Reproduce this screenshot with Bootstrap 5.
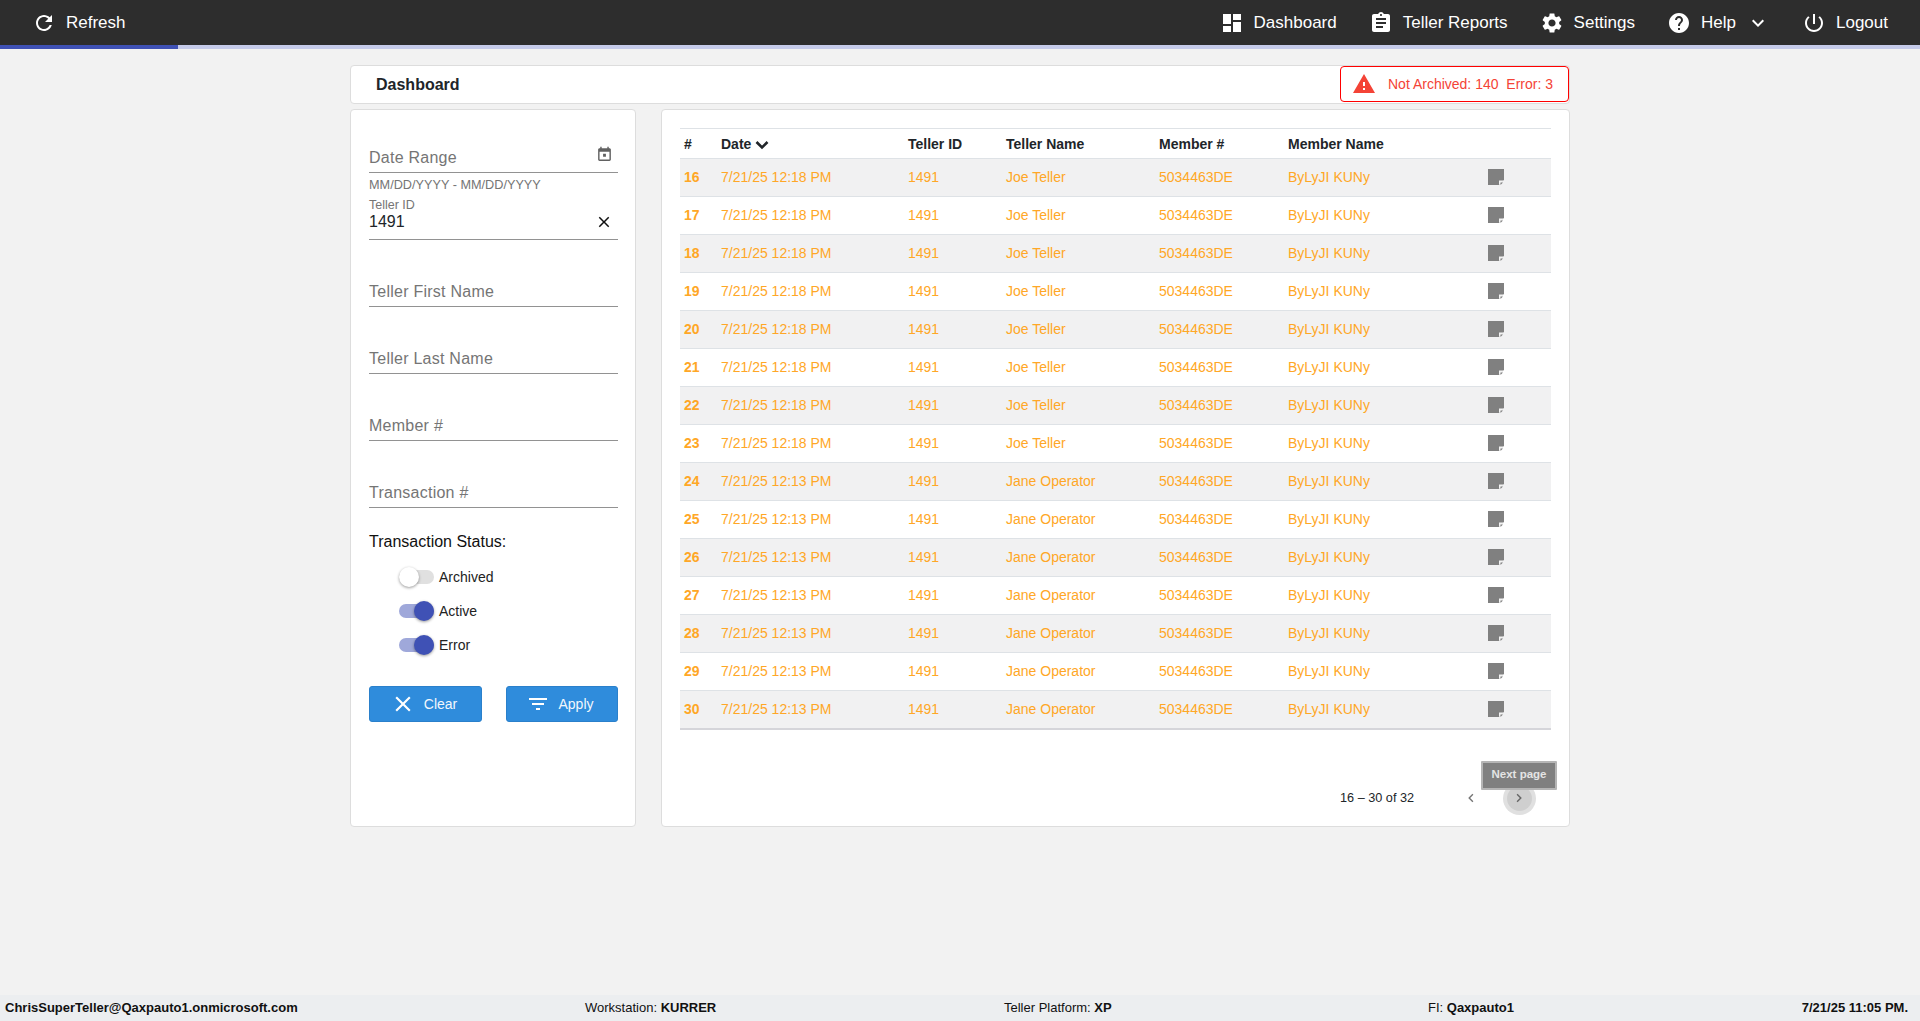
<!DOCTYPE html>
<html lang="en">
<head>
<meta charset="utf-8">
<title>Dashboard</title>
<link href="https://cdn.jsdelivr.net/npm/bootstrap@5.3.0/dist/css/bootstrap.min.css" rel="stylesheet">
<style>
html,body{height:100%}
body{background:#f2f2f2;font-family:"Liberation Sans",Arial,sans-serif;font-size:14px;color:#212529}
.shell{min-height:1021px;height:1021px}
.topbar{height:45px;background:#2d2d2d;color:#fff;padding:0 32px;font-size:17px}
.topbar .navlink{color:#fff;text-decoration:none;display:flex;align-items:center}
.topbar .navlink+.navlink{margin-left:32px}
.topbar svg{fill:#fff}
.ico24{width:24px;height:24px;margin-right:10px}
.helpchev{width:24px;height:24px;margin-left:10px}
.progresswrap{height:4px;background:#c5cae9}
.progressfill{height:4px;width:178px;background:#3f51b5}
.wrap{width:1220px;margin:16px auto 0}
.titlecard{height:39px;background:#fff;border:1px solid #ddd;border-radius:4px;margin-bottom:5px;padding-left:25px}
.titletext{font-size:16px;font-weight:700;color:#212529}
.alertbox{width:229px;height:36px;align-self:flex-start;border:1px solid #f00;border-radius:4px;color:#f44336;font-size:14px;padding-left:11px;background:#fff;white-space:pre}
.alertbox svg{width:24px;height:24px;fill:#f44336;margin-right:12px}
.sidecard{width:286px;height:718px;background:#fff;border:1px solid #ddd;border-radius:4px;padding:1px 17px 0 18px;flex:none}
.maincard{width:909px;height:718px;background:#fff;border:1px solid #ddd;border-radius:4px;padding:18px 18px 0;flex:none}
.fieldbox{border-bottom:1px solid #929292;position:relative;height:67px;color:#757575;font-size:16px;display:flex;align-items:flex-end;padding-bottom:4px;letter-spacing:.25px}
.fieldbox .fieldtxt{line-height:20px}
.fieldbox.firstbox{height:62px}
.fieldbox.tellerbox{height:45px;display:block;padding:0;letter-spacing:0}
.hinttxt{font-size:12.7px;color:#757575;height:22px;line-height:22px;padding-top:1px}
.minilabel{font-size:12.5px;line-height:14px;color:#757575;padding-top:3px;height:18px}
.valtxt{font-size:16px;line-height:18px;color:#212529}
.calico{position:absolute;right:5px;top:35px;width:17px;height:17px}
.clearico{position:absolute;right:5px;top:18px;width:18px;height:18px}
.statustitle{font-size:16px;color:#111;margin-top:24px;line-height:20px;margin-bottom:8px}
.togglerow{height:34px;padding-left:30px;color:#222;font-size:14px}
.toggletrack{width:35px;height:14px;border-radius:7px;background:#9fa8da;position:relative;margin-right:5px;display:block}
.toggletrack.offstate{background:#e0e0e0}
.togglethumb{position:absolute;width:20px;height:20px;border-radius:50%;top:-3px;right:0;background:#3f51b5;box-shadow:0 1px 3px rgba(0,0,0,.4)}
.offstate .togglethumb{right:auto;left:0;background:#fff}
.actionbtn{height:36px;background:#2f8cdc;border:1px solid #2a80cb;border-radius:3px;color:#f2f7fc;font-size:14px;padding:0}
.actionbtn:hover{background:#2f8cdc;color:#fff}
.actionbtn svg{fill:#fff;width:24px;height:24px}
.actionbtn svg.xico{width:26px;height:26px}
.btnclear{width:113px;padding-right:4px}
.btnapply{width:112px;padding-right:4px}
.tellertable{width:871px;margin:0;font-size:14px;table-layout:fixed;border-top:1px solid #dee2e6;--bs-table-bg:transparent;--bs-table-striped-bg:#f1f1f2}
.tellertable th{height:30px;padding:1px 0 0 4px;font-size:14px;font-weight:700;color:#212529;vertical-align:middle;border-bottom:1px solid #dee2e6}
.tellertable td{height:38px;padding:0 0 0 4px;vertical-align:middle;color:#ffa726;--bs-table-color-type:#ffa726;--bs-table-striped-color:#ffa726;border-bottom:1px solid #dee2e6;white-space:nowrap}
.tellertable tr:last-child td{border-bottom:2px solid #d5d5da}
.tellertable td:first-child{font-weight:700}
.noteico{width:24px;height:24px;display:block;margin-top:-1px}
.pagerrow{position:relative;height:90px;width:871px;font-size:12.7px;color:#212529}
.pagertext{position:absolute;left:660px;top:60px;line-height:16px}
.pagerprev,.pagernext{position:absolute;width:24px;height:24px;top:56px;fill:#757575}
.pagerprev{left:779px}
.pagernext{left:827px;fill:#666}
.pagerhalo{position:absolute;left:823px;top:52px;width:33px;height:33px;border-radius:50%;background:#e0e0e0}
.pagerhalo2{position:absolute;left:827px;top:56px;width:25px;height:25px;border-radius:50%;background:#cfcfcf}
.tiptxt{position:absolute;left:801px;top:31px;width:76px;height:29px;background:#808080;border:2px solid #b5b5b5;border-radius:1px;color:#e4e4e4;font-size:11.5px;font-weight:700;display:flex;align-items:center;justify-content:center}
.bottombar{height:26px;background:#eceef0;font-size:13px;color:#111;position:relative}
.bottombar>span{position:absolute;top:0;line-height:26px;white-space:nowrap}
.footmail{left:5px}
.footwork{left:585px}
.footplat{left:1004px}
.footfi{left:1428px}
.footdate{right:12px}
</style>
</head>
<body>
<svg width="0" height="0" class="d-block position-absolute">
<symbol id="noteglyph" viewBox="0 0 24 24"><path fill="#808080" d="M4 4h16v11l-5 5H4z"/><path fill="#fff" d="M15 20v-4.500h5z" opacity=".9"/><path fill="#808080" d="M16.500 20v-2.500H19z"/></symbol>
</svg>
<div class="shell d-flex flex-column">
  <nav class="topbar d-flex align-items-center justify-content-between">
    <a class="navlink" href="#"><svg class="ico24" viewBox="0 0 24 24"><path d="M17.650 6.350C16.200 4.900 14.210 4 12 4c-4.420 0-7.990 3.580-7.990 8s3.570 8 7.990 8c3.730 0 6.840-2.550 7.730-6h-2.080c-.82 2.330-3.040 4-5.650 4-3.310 0-6-2.690-6-6s2.690-6 6-6c1.660 0 3.140.69 4.220 1.780L13 11h7V4l-2.350 2.350z"/></svg>Refresh</a>
    <div class="d-flex align-items-center">
      <a class="navlink" href="#"><svg class="ico24" viewBox="0 0 24 24"><path d="M3 13h8V3H3v10zm0 8h8v-6H3v6zm10 0h8V11h-8v10zm0-18v6h8V3h-8z"/></svg>Dashboard</a>
      <a class="navlink" href="#"><svg class="ico24" viewBox="0 0 24 24"><path d="M19 3h-4.180C14.400 1.840 13.300 1 12 1c-1.300 0-2.400.84-2.820 2H5c-1.100 0-2 .9-2 2v14c0 1.100.9 2 2 2h14c1.100 0 2-.9 2-2V5c0-1.100-.9-2-2-2zm-7 0c.55 0 1 .45 1 1s-.45 1-1 1-1-.45-1-1 .45-1 1-1zm2 14H7v-2h7v2zm3-4H7v-2h10v2zm0-4H7V7h10v2z"/></svg>Teller Reports</a>
      <a class="navlink" href="#"><svg class="ico24" viewBox="0 0 24 24"><path d="M19.140 12.940c.04-.3.06-.61.06-.94 0-.32-.02-.64-.07-.94l2.030-1.580c.18-.14.23-.41.12-.61l-1.920-3.320c-.12-.22-.37-.29-.59-.22l-2.390.96c-.5-.38-1.030-.7-1.620-.94l-.36-2.540c-.04-.24-.24-.41-.48-.41h-3.840c-.24 0-.43.17-.47.41l-.36 2.540c-.59.24-1.130.57-1.620.94l-2.390-.96c-.22-.08-.47 0-.59.22L2.740 8.870c-.12.21-.08.47.12.61l2.030 1.580c-.05.3-.09.63-.09.94s.02.64.07.94l-2.030 1.580c-.18.14-.23.41-.12.61l1.920 3.320c.12.22.37.29.59.22l2.390-.96c.5.38 1.030.7 1.620.94l.36 2.540c.05.24.24.41.48.41h3.840c.24 0 .44-.17.47-.41l.36-2.540c.59-.24 1.130-.56 1.620-.94l2.390.96c.22.08.47 0 .59-.22l1.920-3.320c.12-.22.07-.47-.12-.61l-2.010-1.580zM12 15.600c-1.980 0-3.600-1.620-3.600-3.600s1.620-3.600 3.600-3.600 3.600 1.620 3.600 3.600-1.620 3.600-3.600 3.600z"/></svg>Settings</a>
      <a class="navlink" href="#"><svg class="ico24" viewBox="0 0 24 24"><path d="M12 2C6.480 2 2 6.480 2 12s4.480 10 10 10 10-4.480 10-10S17.520 2 12 2zm1 17h-2v-2h2v2zm2.070-7.750l-.9.92C13.450 12.900 13 13.500 13 15h-2v-.5c0-1.100.45-2.100 1.170-2.830l1.240-1.260c.37-.36.59-.86.59-1.410 0-1.100-.9-2-2-2s-2 .9-2 2H8c0-2.210 1.790-4 4-4s4 1.790 4 4c0 .88-.36 1.680-.93 2.250z"/></svg>Help<svg class="helpchev" viewBox="0 0 24 24"><path d="M7.410 8.590L12 13.170l4.590-4.580L18 10l-6 6-6-6z"/></svg></a>
      <a class="navlink" href="#"><svg class="ico24" viewBox="0 0 24 24"><path d="M13 3h-2v10h2V3zm4.830 2.170l-1.420 1.420C17.990 7.860 19 9.810 19 12c0 3.870-3.130 7-7 7s-7-3.130-7-7c0-2.190 1.010-4.140 2.580-5.420L6.170 5.170C4.230 6.820 3 9.260 3 12c0 4.970 4.030 9 9 9s9-4.030 9-9c0-2.740-1.230-5.180-3.170-6.830z"/></svg>Logout</a>
    </div>
  </nav>
  <div class="progresswrap"><div class="progressfill"></div></div>

  <main class="wrap">
    <div class="titlecard d-flex align-items-center justify-content-between">
      <span class="titletext">Dashboard</span>
      <div class="alertbox d-flex align-items-center"><svg viewBox="0 0 24 24"><path d="M1 21h22L12 2 1 21zm12-3h-2v-2h2v2zm0-4h-2v-4h2v4z"/></svg>Not Archived: 140  Error: 3</div>
    </div>
    <div class="d-flex justify-content-between">
      <aside class="sidecard">
        <div class="fieldbox firstbox"><span class="fieldtxt">Date Range</span>
          <svg class="calico" viewBox="0 0 24 24" fill="#616161"><path d="M19 3h-1V1h-2v2H8V1H6v2H5c-1.110 0-1.990.9-1.990 2L3 19c0 1.100.89 2 2 2h14c1.100 0 2-.9 2-2V5c0-1.100-.9-2-2-2zm0 16H5V8h14v11zM10 11h4v4h-4z"/></svg>
        </div>
        <div class="hinttxt">MM/DD/YYYY - MM/DD/YYYY</div>
        <div class="fieldbox tellerbox">
          <div class="minilabel">Teller ID</div>
          <div class="valtxt">1491</div>
          <svg class="clearico" viewBox="0 0 24 24" fill="#111"><path d="M19 6.410L17.590 5 12 10.590 6.410 5 5 6.410 10.590 12 5 17.590 6.410 19 12 13.410 17.590 19 19 17.590 13.410 12z"/></svg>
        </div>
        <div class="fieldbox"><span class="fieldtxt">Teller First Name</span></div>
        <div class="fieldbox"><span class="fieldtxt">Teller Last Name</span></div>
        <div class="fieldbox"><span class="fieldtxt">Member #</span></div>
        <div class="fieldbox"><span class="fieldtxt">Transaction #</span></div>
        <div class="statustitle">Transaction Status:</div>
        <div class="togglerow d-flex align-items-center"><span class="toggletrack offstate"><span class="togglethumb"></span></span>Archived</div>
        <div class="togglerow d-flex align-items-center"><span class="toggletrack"><span class="togglethumb"></span></span>Active</div>
        <div class="togglerow d-flex align-items-center"><span class="toggletrack"><span class="togglethumb"></span></span>Error</div>
        <div class="d-flex justify-content-between mt-4">
          <button class="btn actionbtn btnclear d-flex align-items-center justify-content-center gap-2" type="button"><svg class="xico" viewBox="0 0 24 24"><path d="M19 6.410L17.590 5 12 10.590 6.410 5 5 6.410 10.590 12 5 17.590 6.410 19 12 13.410 17.590 19 19 17.590 13.410 12z"/></svg>Clear</button>
          <button class="btn actionbtn btnapply d-flex align-items-center justify-content-center gap-2" type="button"><svg viewBox="0 0 24 24"><path d="M10 18h4v-2h-4v2zM3 6v2h18V6H3zm3 7h12v-2H6v2z"/></svg>Apply</button>
        </div>
      </aside>
      <section class="maincard">
        <table class="table table-striped tellertable">
          <colgroup><col style="width:37px"><col style="width:187px"><col style="width:98px"><col style="width:153px"><col style="width:129px"><col style="width:196px"><col></colgroup>
          <thead><tr><th>#</th><th>Date <svg width="14" height="10" viewBox="0 0 14 10" fill="none" stroke="#212529" stroke-width="2.600"><path d="M1.500 2L7 7.500 12.500 2"/></svg></th><th>Teller ID</th><th>Teller Name</th><th>Member #</th><th>Member Name</th><th></th></tr></thead>
          <tbody>
            <tr><td>16</td><td>7/21/25 12:18 PM</td><td>1491</td><td>Joe Teller</td><td>5034463DE</td><td>ByLyJI KUNy</td><td><svg class="noteico"><use href="#noteglyph"/></svg></td></tr>
            <tr><td>17</td><td>7/21/25 12:18 PM</td><td>1491</td><td>Joe Teller</td><td>5034463DE</td><td>ByLyJI KUNy</td><td><svg class="noteico"><use href="#noteglyph"/></svg></td></tr>
            <tr><td>18</td><td>7/21/25 12:18 PM</td><td>1491</td><td>Joe Teller</td><td>5034463DE</td><td>ByLyJI KUNy</td><td><svg class="noteico"><use href="#noteglyph"/></svg></td></tr>
            <tr><td>19</td><td>7/21/25 12:18 PM</td><td>1491</td><td>Joe Teller</td><td>5034463DE</td><td>ByLyJI KUNy</td><td><svg class="noteico"><use href="#noteglyph"/></svg></td></tr>
            <tr><td>20</td><td>7/21/25 12:18 PM</td><td>1491</td><td>Joe Teller</td><td>5034463DE</td><td>ByLyJI KUNy</td><td><svg class="noteico"><use href="#noteglyph"/></svg></td></tr>
            <tr><td>21</td><td>7/21/25 12:18 PM</td><td>1491</td><td>Joe Teller</td><td>5034463DE</td><td>ByLyJI KUNy</td><td><svg class="noteico"><use href="#noteglyph"/></svg></td></tr>
            <tr><td>22</td><td>7/21/25 12:18 PM</td><td>1491</td><td>Joe Teller</td><td>5034463DE</td><td>ByLyJI KUNy</td><td><svg class="noteico"><use href="#noteglyph"/></svg></td></tr>
            <tr><td>23</td><td>7/21/25 12:18 PM</td><td>1491</td><td>Joe Teller</td><td>5034463DE</td><td>ByLyJI KUNy</td><td><svg class="noteico"><use href="#noteglyph"/></svg></td></tr>
            <tr><td>24</td><td>7/21/25 12:13 PM</td><td>1491</td><td>Jane Operator</td><td>5034463DE</td><td>ByLyJI KUNy</td><td><svg class="noteico"><use href="#noteglyph"/></svg></td></tr>
            <tr><td>25</td><td>7/21/25 12:13 PM</td><td>1491</td><td>Jane Operator</td><td>5034463DE</td><td>ByLyJI KUNy</td><td><svg class="noteico"><use href="#noteglyph"/></svg></td></tr>
            <tr><td>26</td><td>7/21/25 12:13 PM</td><td>1491</td><td>Jane Operator</td><td>5034463DE</td><td>ByLyJI KUNy</td><td><svg class="noteico"><use href="#noteglyph"/></svg></td></tr>
            <tr><td>27</td><td>7/21/25 12:13 PM</td><td>1491</td><td>Jane Operator</td><td>5034463DE</td><td>ByLyJI KUNy</td><td><svg class="noteico"><use href="#noteglyph"/></svg></td></tr>
            <tr><td>28</td><td>7/21/25 12:13 PM</td><td>1491</td><td>Jane Operator</td><td>5034463DE</td><td>ByLyJI KUNy</td><td><svg class="noteico"><use href="#noteglyph"/></svg></td></tr>
            <tr><td>29</td><td>7/21/25 12:13 PM</td><td>1491</td><td>Jane Operator</td><td>5034463DE</td><td>ByLyJI KUNy</td><td><svg class="noteico"><use href="#noteglyph"/></svg></td></tr>
            <tr><td>30</td><td>7/21/25 12:13 PM</td><td>1491</td><td>Jane Operator</td><td>5034463DE</td><td>ByLyJI KUNy</td><td><svg class="noteico"><use href="#noteglyph"/></svg></td></tr>
          </tbody>
        </table>
        <div class="pagerrow">
          <span class="pagertext">16 – 30 of 32</span>
          <svg class="pagerprev" viewBox="0 0 24 24"><path d="M15.410 7.410L14 6l-6 6 6 6 1.410-1.410L10.830 12z" transform="translate(12 12) scale(.7) translate(-12 -12)"/></svg>
          <span class="pagerhalo"></span><span class="pagerhalo2"></span>
          <svg class="pagernext" viewBox="0 0 24 24"><path d="M10 6L8.590 7.410 13.170 12l-4.580 4.590L10 18l6-6z" transform="translate(12 12) scale(.7) translate(-12 -12)"/></svg>
          <div class="tiptxt">Next page</div>
        </div>
      </section>
    </div>
  </main>

  <footer class="bottombar mt-auto">
    <span class="footmail"><b>ChrisSuperTeller@Qaxpauto1.onmicrosoft.com</b></span>
    <span class="footwork">Workstation: <b>KURRER</b></span>
    <span class="footplat">Teller Platform: <b>XP</b></span>
    <span class="footfi">FI: <b>Qaxpauto1</b></span>
    <span class="footdate"><b>7/21/25 11:05 PM.</b></span>
  </footer>
</div>
<script src="https://cdn.jsdelivr.net/npm/bootstrap@5.3.0/dist/js/bootstrap.bundle.min.js"></script>
</body>
</html>
